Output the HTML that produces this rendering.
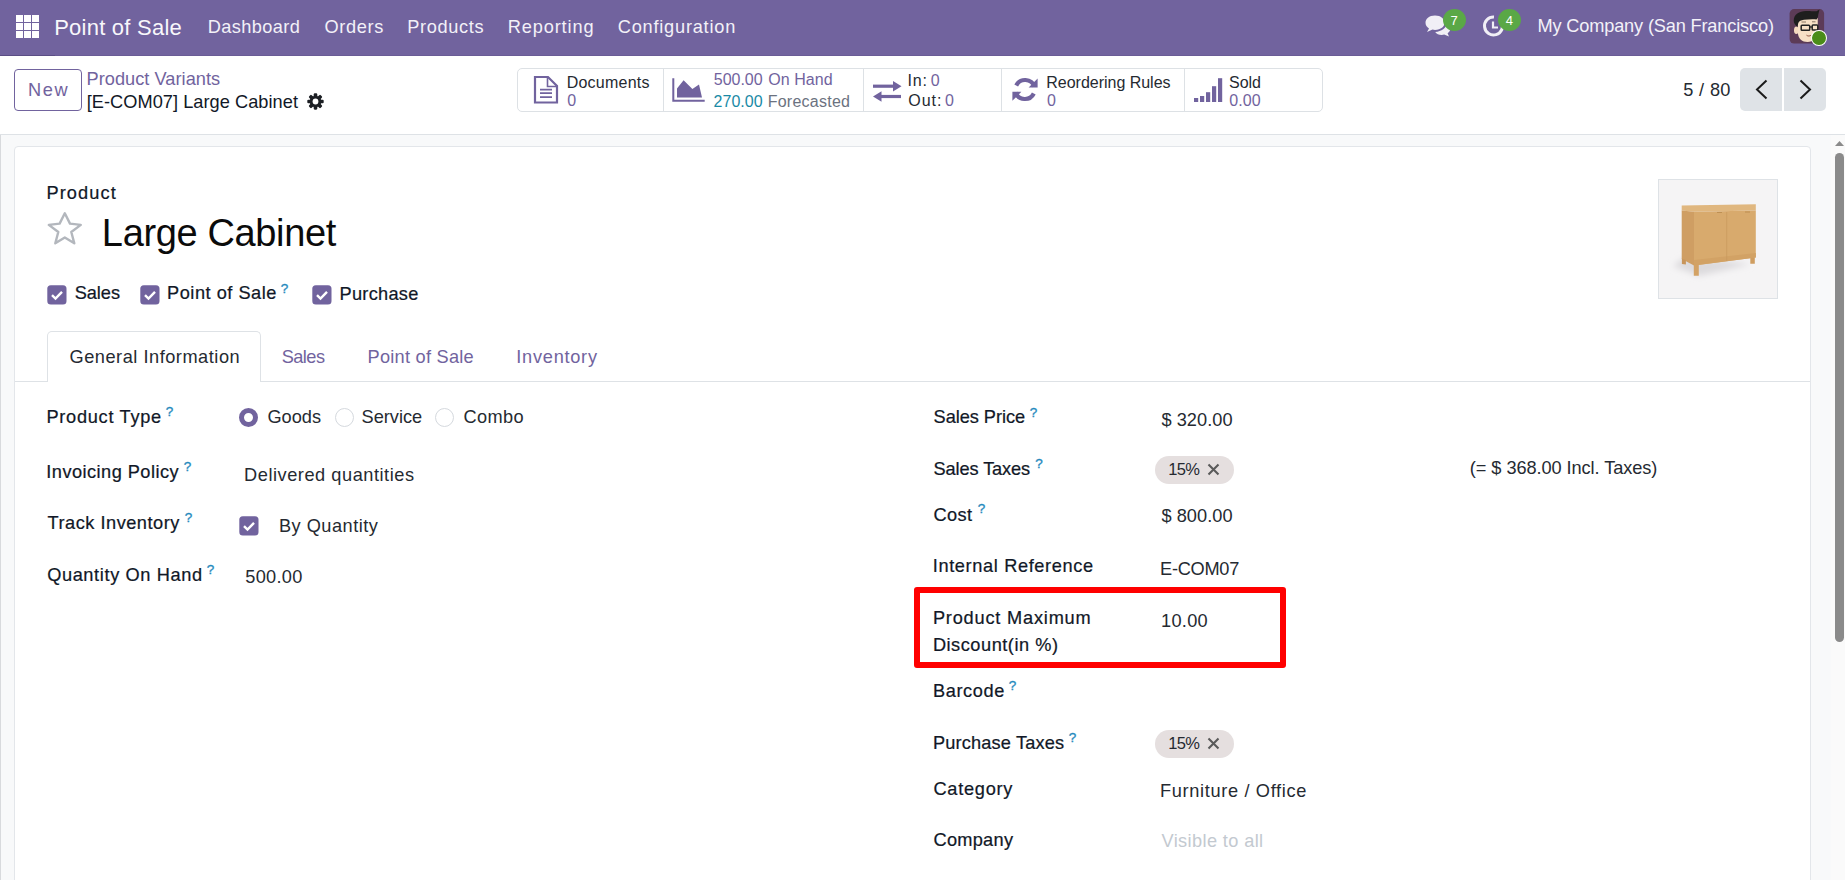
<!DOCTYPE html>
<html><head><meta charset="utf-8"><style>
html,body{margin:0;padding:0;width:1845px;height:880px;overflow:hidden;background:#fff;font-family:"Liberation Sans",sans-serif;}
.t{position:absolute;white-space:pre;line-height:1;}
</style></head><body>
<div style="position:absolute;left:0px;top:134px;width:1845px;height:746px;background:#f8f9fa"></div>
<div style="position:absolute;left:0px;top:134px;width:1px;height:746px;background:#d8dadd"></div>
<div style="position:absolute;left:14px;top:146px;width:1797px;height:760px;background:#fff;border:1px solid #e3e6ea;border-radius:4px;box-sizing:border-box"></div>
<div style="position:absolute;left:1831px;top:134px;width:14px;height:746px;background:#fafafa"></div>
<svg style="position:absolute;left:1834px;top:139px" width="11" height="8" viewBox="0 0 11 8"><path d="M1 7 L5.5 2 L10 7 Z" fill="#8a8a8a"/></svg>
<div style="position:absolute;left:1835px;top:153px;width:9px;height:489px;background:#8a8a8a;border-radius:4.5px"></div>
<div style="position:absolute;left:0px;top:0px;width:1845px;height:56px;background:#71639e"></div>
<div style="position:absolute;left:0px;top:55px;width:1845px;height:1px;background:#6a5c96"></div>
<div style="position:absolute;left:0px;top:55px;width:55px;height:1px;background:#5b4e85"></div>
<div style="position:absolute;left:16px;top:15px;width:7px;height:7px;background:#fff"></div>
<div style="position:absolute;left:16px;top:23px;width:7px;height:7px;background:#fff"></div>
<div style="position:absolute;left:16px;top:31px;width:7px;height:7px;background:#fff"></div>
<div style="position:absolute;left:24px;top:15px;width:7px;height:7px;background:#fff"></div>
<div style="position:absolute;left:24px;top:23px;width:7px;height:7px;background:#fff"></div>
<div style="position:absolute;left:24px;top:31px;width:7px;height:7px;background:#fff"></div>
<div style="position:absolute;left:32px;top:15px;width:7px;height:7px;background:#fff"></div>
<div style="position:absolute;left:32px;top:23px;width:7px;height:7px;background:#fff"></div>
<div style="position:absolute;left:32px;top:31px;width:7px;height:7px;background:#fff"></div>
<div class="t" style="left:54.19px;top:17.18px;font-size:22px;letter-spacing:0.234px;color:#f8f7fb;font-weight:400;">Point of Sale</div>
<div class="t" style="left:207.80px;top:17.59px;font-size:18.2px;letter-spacing:0.380px;color:#f3f1f8;font-weight:400;">Dashboard</div>
<div class="t" style="left:324.54px;top:17.59px;font-size:18.2px;letter-spacing:0.660px;color:#f3f1f8;font-weight:400;">Orders</div>
<div class="t" style="left:407.20px;top:17.59px;font-size:18.2px;letter-spacing:0.656px;color:#f3f1f8;font-weight:400;">Products</div>
<div class="t" style="left:507.70px;top:17.59px;font-size:18.2px;letter-spacing:0.880px;color:#f3f1f8;font-weight:400;">Reporting</div>
<div class="t" style="left:617.79px;top:17.59px;font-size:18.2px;letter-spacing:0.775px;color:#f3f1f8;font-weight:400;">Configuration</div>
<svg style="position:absolute;left:1424px;top:14px" width="28" height="24" viewBox="0 0 28 24"><path d="M11 1.5 C5 1.5 1.5 4.8 1.5 8.8 C1.5 11.2 2.8 13.2 5 14.5 L3 18 L8.5 15.6 C9.3 15.8 10.1 15.9 11 15.9 C17 15.9 20.5 12.6 20.5 8.8 C20.5 4.8 17 1.5 11 1.5 Z" fill="#f1eff6"/><path d="M22.5 9.5 C24.8 10.7 26.3 12.6 26.3 14.8 C26.3 16.6 25.3 18.2 23.6 19.3 L25 22.5 L20.2 20.6 C19.4 20.8 18.6 20.9 17.8 20.9 C14.8 20.9 12.4 19.7 11.2 17.9 C17.5 17.6 22.5 14 22.5 9.5 Z" fill="#f1eff6"/></svg>
<div style="position:absolute;left:1443px;top:9px;width:23px;height:22px;background:#5aa846;border-radius:50%"></div>
<div class="t" style="left:1450.6px;top:13.5px;font-size:13px;color:#fff;font-weight:400;">7</div>
<svg style="position:absolute;left:1482px;top:14px" width="24" height="24" viewBox="0 0 24 24"><path d="M19.6 8 A9 9 0 1 1 12 3" fill="none" stroke="#f1eff6" stroke-width="3"/><path d="M11 7.5 V13.5 H16" fill="none" stroke="#f1eff6" stroke-width="2.2"/></svg>
<div style="position:absolute;left:1498px;top:9px;width:23px;height:22px;background:#5aa846;border-radius:50%"></div>
<div class="t" style="left:1505.8px;top:13.5px;font-size:13px;color:#fff;font-weight:400;">4</div>
<div class="t" style="left:1537.50px;top:17.39px;font-size:18.2px;letter-spacing:-0.164px;color:#f3f1f8;font-weight:400;">My Company (San Francisco)</div>
<svg style="position:absolute;left:1789px;top:9px" width="36" height="36" viewBox="0 0 36 36"><rect x="0.6" y="0.1" width="34.5" height="34.5" rx="4.5" fill="#5c3b57"/>
<ellipse cx="7.3" cy="21.3" rx="2.3" ry="3.8" fill="#f5d9bd"/>
<path d="M8.8 9 L28.7 9 L28.9 24 C28.5 29.5 24 33 18.5 33 C13 33 9.5 30 8.8 24 Z" fill="#f7e0c6"/>
<path d="M4.7 11.5 C5 5 10 2.2 17 2 C21 1.8 25 2.5 27.5 2.2 L30.5 0.6 C30 2.5 29.8 4 29.3 5.5 C29 8 28.5 9.5 27.5 10.5 C24 9.8 19 10.3 15 10.8 C12 11.2 10 12 9.3 14 L8.3 18 C6.5 16 4.5 14 4.7 11.5 Z" fill="#1e1e1e"/>
<rect x="12.2" y="16.3" width="8.5" height="5" rx="0.8" fill="none" stroke="#222" stroke-width="1.5"/>
<rect x="23.2" y="16.1" width="5.6" height="5" rx="0.8" fill="none" stroke="#222" stroke-width="1.5"/>
<path d="M20.7 18 H23.2" stroke="#222" stroke-width="1.3"/>
<path d="M12.5 13 H17 M23 12.8 H26.5" stroke="#6d5a4a" stroke-width="0.8"/>
<path d="M17.5 26.2 C18.8 27.2 20.5 27.2 21.8 26.4" fill="none" stroke="#8a4a3a" stroke-width="1"/></svg>
<div style="position:absolute;left:1810.8px;top:30px;width:16px;height:16.4px;background:#4a8c19;border:1.6px solid #fff;border-radius:50%;box-sizing:border-box"></div>
<div style="position:absolute;left:0px;top:56px;width:1845px;height:79px;background:#fff;border-bottom:1px solid #dee2e6;box-sizing:border-box"></div>
<div style="position:absolute;left:14px;top:69px;width:68px;height:42px;border:1px solid #71639e;border-radius:4px;box-sizing:border-box"></div>
<div class="t" style="left:28.10px;top:80.59px;font-size:18.2px;letter-spacing:1.528px;color:#71639e;font-weight:400;">New</div>
<div class="t" style="left:86.50px;top:69.59px;font-size:18.2px;letter-spacing:0.037px;color:#71639e;font-weight:400;">Product Variants</div>
<div class="t" style="left:86.73px;top:92.99px;font-size:18.2px;letter-spacing:0.046px;color:#111827;font-weight:400;">[E-COM07] Large Cabinet</div>
<svg style="position:absolute;left:307px;top:92.9px" width="17" height="17" viewBox="0 0 17 17"><g transform="translate(8.5,8.5)"><rect x="-1.8" y="-8.2" width="3.6" height="4.5" rx="1.1" transform="rotate(0)" fill="#1c1f24"/><rect x="-1.8" y="-8.2" width="3.6" height="4.5" rx="1.1" transform="rotate(45)" fill="#1c1f24"/><rect x="-1.8" y="-8.2" width="3.6" height="4.5" rx="1.1" transform="rotate(90)" fill="#1c1f24"/><rect x="-1.8" y="-8.2" width="3.6" height="4.5" rx="1.1" transform="rotate(135)" fill="#1c1f24"/><rect x="-1.8" y="-8.2" width="3.6" height="4.5" rx="1.1" transform="rotate(180)" fill="#1c1f24"/><rect x="-1.8" y="-8.2" width="3.6" height="4.5" rx="1.1" transform="rotate(225)" fill="#1c1f24"/><rect x="-1.8" y="-8.2" width="3.6" height="4.5" rx="1.1" transform="rotate(270)" fill="#1c1f24"/><rect x="-1.8" y="-8.2" width="3.6" height="4.5" rx="1.1" transform="rotate(315)" fill="#1c1f24"/><circle r="5.8" fill="#1c1f24"/><circle r="2.9" fill="#fff"/></g></svg>
<div style="position:absolute;left:517px;top:68px;width:806px;height:44px;border:1px solid #dde1e5;border-radius:5px;box-sizing:border-box"></div>
<div style="position:absolute;left:663px;top:69px;width:1.2px;height:42px;background:#dde1e5"></div>
<div style="position:absolute;left:863px;top:69px;width:1.2px;height:42px;background:#dde1e5"></div>
<div style="position:absolute;left:1001px;top:69px;width:1.2px;height:42px;background:#dde1e5"></div>
<div style="position:absolute;left:1184px;top:69px;width:1.2px;height:42px;background:#dde1e5"></div>
<svg style="position:absolute;left:533px;top:75px" width="27" height="30" viewBox="0 0 27 30"><path d="M2 2 H15 L24 11 V27.5 H2 Z" fill="none" stroke="#71639e" stroke-width="2.2" stroke-linejoin="miter"/><path d="M14.5 2 V11.5 H24" fill="none" stroke="#71639e" stroke-width="1.6"/><path d="M7 14.6 H19 M7 18.2 H19 M7 22.2 H19" stroke="#71639e" stroke-width="1.8"/></svg>
<div class="t" style="left:566.68px;top:75.26px;font-size:16px;letter-spacing:0.245px;color:#252a31;font-weight:400;">Documents</div>
<div class="t" style="left:567.36px;top:93.26px;font-size:16px;letter-spacing:0.000px;color:#71639e;font-weight:400;">0</div>
<svg style="position:absolute;left:671px;top:77px" width="35" height="27" viewBox="0 0 35 27"><path d="M2.3 1.2 V23.8 H33.7" fill="none" stroke="#71639e" stroke-width="2"/><path d="M6 20.6 V11.5 L12.6 3.3 L21.4 12 L28 7.4 L31 20.6 Z" fill="#71639e"/></svg>
<div class="t" style="left:713.76px;top:72.26px;font-size:16px;letter-spacing:-0.016px;color:#71639e;font-weight:400;">500.00</div>
<div class="t" style="left:768.24px;top:72.26px;font-size:16px;letter-spacing:0.053px;color:#71639e;font-weight:400;">On Hand</div>
<div class="t" style="left:713.60px;top:93.86px;font-size:16px;letter-spacing:0.016px;color:#1a8aa6;font-weight:400;">270.00</div>
<div class="t" style="left:767.68px;top:93.86px;font-size:16px;letter-spacing:0.253px;color:#6b7280;font-weight:400;">Forecasted</div>
<svg style="position:absolute;left:872px;top:80px" width="31" height="23" viewBox="0 0 31 23"><path d="M1 6.2 H22" stroke="#71639e" stroke-width="3.2"/><path d="M21 1 L29.5 6.2 L21 11.4 Z" fill="#71639e"/><path d="M29 16.5 H8" stroke="#71639e" stroke-width="3.2"/><path d="M9.5 11.3 L1 16.5 L9.5 21.7 Z" fill="#71639e"/></svg>
<div class="t" style="left:907.52px;top:73.26px;font-size:16px;letter-spacing:0.860px;color:#252a31;font-weight:400;">In:</div>
<div class="t" style="left:930.76px;top:73.26px;font-size:16px;letter-spacing:0.000px;color:#71639e;font-weight:400;">0</div>
<div class="t" style="left:908.24px;top:93.26px;font-size:16px;letter-spacing:0.987px;color:#252a31;font-weight:400;">Out:</div>
<div class="t" style="left:944.96px;top:93.26px;font-size:16px;letter-spacing:0.000px;color:#71639e;font-weight:400;">0</div>
<svg style="position:absolute;left:1012px;top:77px" width="28" height="27" viewBox="0 0 28 27"><path d="M22.5 9.5 A10 10 0 0 0 4.2 8.5" fill="none" stroke="#71639e" stroke-width="4.2"/><path d="M25.6 1.6 V10.6 H16.6 Z" fill="#71639e"/><path d="M3.5 15.5 A10 10 0 0 0 21.8 16.5" fill="none" stroke="#71639e" stroke-width="4.2"/><path d="M0.4 23.8 V14.8 H9.4 Z" fill="#71639e"/></svg>
<div class="t" style="left:1046.28px;top:75.26px;font-size:16px;letter-spacing:-0.016px;color:#252a31;font-weight:400;">Reordering Rules</div>
<div class="t" style="left:1046.96px;top:93.26px;font-size:16px;letter-spacing:0.000px;color:#71639e;font-weight:400;">0</div>
<svg style="position:absolute;left:1194px;top:78px" width="30" height="24" viewBox="0 0 30 24"><rect x="0" y="20" width="4.2" height="4" fill="#71639e"/><rect x="6" y="18" width="4.2" height="6" fill="#71639e"/><rect x="12" y="14.2" width="4.2" height="9.8" fill="#71639e"/><rect x="18" y="8.2" width="4.2" height="15.8" fill="#71639e"/><rect x="24" y="0.2" width="4.2" height="23.8" fill="#71639e"/></svg>
<div class="t" style="left:1229.08px;top:75.26px;font-size:16px;letter-spacing:-0.027px;color:#252a31;font-weight:400;">Sold</div>
<div class="t" style="left:1229.36px;top:92.76px;font-size:16px;letter-spacing:0.040px;color:#71639e;font-weight:400;">0.00</div>
<div class="t" style="left:1683.27px;top:80.59px;font-size:18.2px;letter-spacing:0.342px;color:#252a31;font-weight:400;">5 / 80</div>
<div style="position:absolute;left:1740px;top:68px;width:42px;height:43px;background:#dfe3e7;border-radius:5px 0 0 5px"></div>
<div style="position:absolute;left:1784px;top:68px;width:42px;height:43px;background:#dfe3e7;border-radius:0 5px 5px 0"></div>
<svg style="position:absolute;left:1754px;top:79px" width="16" height="21" viewBox="0 0 16 21"><path d="M12.5 1.5 L3 10.5 L12.5 19.5" fill="none" stroke="#1b1b1b" stroke-width="2"/></svg>
<svg style="position:absolute;left:1797px;top:79px" width="16" height="21" viewBox="0 0 16 21"><path d="M3.5 1.5 L13 10.5 L3.5 19.5" fill="none" stroke="#1b1b1b" stroke-width="2"/></svg>
<div class="t" style="left:46.50px;top:183.59px;font-size:18.2px;letter-spacing:1.090px;color:#111827;font-weight:400;-webkit-text-stroke:0.22px #111827;">Product</div>
<svg style="position:absolute;left:46px;top:211px" width="38" height="36" viewBox="0 0 38 36"><path d="M18.8 2.3 L24 12.6 L34.8 13.9 L25.3 21 L28.3 32.3 L18.8 26.5 L9.3 32.3 L12.3 21 L2.8 13.9 L13.6 12.6 Z" fill="none" stroke="#b3b7bd" stroke-width="2.4" stroke-linejoin="round"/></svg>
<div class="t" style="left:101.86px;top:214.23px;font-size:38px;letter-spacing:-0.360px;color:#0b0b0b;font-weight:400;">Large Cabinet</div>
<svg style="position:absolute;left:47px;top:285px" width="20" height="20" viewBox="0 0 20 20"><rect x="0.3" y="0.3" width="19.2" height="19.2" rx="3.5" fill="#71639e"/><path d="M5 10.2 L8.5 13.6 L15 6.8" fill="none" stroke="#fff" stroke-width="2.4"/></svg>
<div class="t" style="left:74.78px;top:284.19px;font-size:18.2px;letter-spacing:-0.072px;color:#111827;font-weight:400;-webkit-text-stroke:0.22px #111827;">Sales</div>
<svg style="position:absolute;left:140px;top:285px" width="20" height="20" viewBox="0 0 20 20"><rect x="0.3" y="0.3" width="19.2" height="19.2" rx="3.5" fill="#71639e"/><path d="M5 10.2 L8.5 13.6 L15 6.8" fill="none" stroke="#fff" stroke-width="2.4"/></svg>
<div class="t" style="left:167.10px;top:284.19px;font-size:18.2px;letter-spacing:0.507px;color:#111827;font-weight:400;-webkit-text-stroke:0.22px #111827;">Point of Sale</div>
<div class="t" style="left:280.8px;top:281.7px;font-size:13.5px;color:#2389bd;font-weight:400;-webkit-text-stroke:0.3px #2389bd">?</div>
<svg style="position:absolute;left:312px;top:285px" width="20" height="20" viewBox="0 0 20 20"><rect x="0.3" y="0.3" width="19.2" height="19.2" rx="3.5" fill="#71639e"/><path d="M5 10.2 L8.5 13.6 L15 6.8" fill="none" stroke="#fff" stroke-width="2.4"/></svg>
<div class="t" style="left:339.50px;top:284.59px;font-size:18.2px;letter-spacing:0.289px;color:#111827;font-weight:400;-webkit-text-stroke:0.22px #111827;">Purchase</div>
<div style="position:absolute;left:15px;top:381px;width:1795px;height:1px;background:#dee2e6"></div>
<div style="position:absolute;left:47px;top:331px;width:214px;height:51px;background:#fff;border:1px solid #dee2e6;border-bottom:none;border-radius:5px 5px 0 0;box-sizing:border-box"></div>
<div class="t" style="left:69.49px;top:347.59px;font-size:18.2px;letter-spacing:0.523px;color:#252a31;font-weight:400;">General Information</div>
<div class="t" style="left:281.78px;top:347.59px;font-size:18.2px;letter-spacing:-0.572px;color:#71639e;font-weight:400;">Sales</div>
<div class="t" style="left:367.50px;top:347.59px;font-size:18.2px;letter-spacing:0.257px;color:#71639e;font-weight:400;">Point of Sale</div>
<div class="t" style="left:516.32px;top:347.59px;font-size:18.2px;letter-spacing:0.735px;color:#71639e;font-weight:400;">Inventory</div>
<div class="t" style="left:46.50px;top:407.59px;font-size:18.2px;letter-spacing:0.709px;color:#111827;font-weight:400;-webkit-text-stroke:0.22px #111827;">Product Type</div>
<div class="t" style="left:165.8px;top:404.7px;font-size:13.5px;color:#2389bd;font-weight:400;-webkit-text-stroke:0.3px #2389bd">?</div>
<div style="position:absolute;left:239px;top:408px;width:19px;height:19px;background:#fff;border:5px solid #71639e;border-radius:50%;box-sizing:border-box"></div>
<div class="t" style="left:267.49px;top:407.59px;font-size:18.2px;letter-spacing:-0.024px;color:#252a31;font-weight:400;">Goods</div>
<div style="position:absolute;left:334.5px;top:408px;width:19px;height:19px;background:#fff;border:1px solid #d5d9de;border-radius:50%;box-sizing:border-box"></div>
<div class="t" style="left:361.58px;top:407.59px;font-size:18.2px;letter-spacing:-0.010px;color:#252a31;font-weight:400;">Service</div>
<div style="position:absolute;left:435px;top:408px;width:19px;height:19px;background:#fff;border:1px solid #d5d9de;border-radius:50%;box-sizing:border-box"></div>
<div class="t" style="left:463.49px;top:407.59px;font-size:18.2px;letter-spacing:0.397px;color:#252a31;font-weight:400;">Combo</div>
<div class="t" style="left:46.32px;top:462.59px;font-size:18.2px;letter-spacing:0.459px;color:#111827;font-weight:400;-webkit-text-stroke:0.22px #111827;">Invoicing Policy</div>
<div class="t" style="left:183.8px;top:459.7px;font-size:13.5px;color:#2389bd;font-weight:400;-webkit-text-stroke:0.3px #2389bd">?</div>
<div class="t" style="left:244.10px;top:465.59px;font-size:18.2px;letter-spacing:0.537px;color:#252a31;font-weight:400;">Delivered quantities</div>
<div class="t" style="left:47.59px;top:513.59px;font-size:18.2px;letter-spacing:0.507px;color:#111827;font-weight:400;-webkit-text-stroke:0.22px #111827;">Track Inventory</div>
<div class="t" style="left:184.8px;top:510.7px;font-size:13.5px;color:#2389bd;font-weight:400;-webkit-text-stroke:0.3px #2389bd">?</div>
<svg style="position:absolute;left:239px;top:516px" width="20" height="20" viewBox="0 0 20 20"><rect x="0.3" y="0.3" width="19.2" height="19.2" rx="3.5" fill="#71639e"/><path d="M5 10.2 L8.5 13.6 L15 6.8" fill="none" stroke="#fff" stroke-width="2.4"/></svg>
<div class="t" style="left:278.90px;top:516.79px;font-size:18.2px;letter-spacing:0.505px;color:#252a31;font-weight:400;">By Quantity</div>
<div class="t" style="left:47.14px;top:565.59px;font-size:18.2px;letter-spacing:0.624px;color:#111827;font-weight:400;-webkit-text-stroke:0.22px #111827;">Quantity On Hand</div>
<div class="t" style="left:206.8px;top:562.7px;font-size:13.5px;color:#2389bd;font-weight:400;-webkit-text-stroke:0.3px #2389bd">?</div>
<div class="t" style="left:245.27px;top:568.19px;font-size:18.2px;letter-spacing:0.273px;color:#252a31;font-weight:400;">500.00</div>
<div class="t" style="left:933.58px;top:407.59px;font-size:18.2px;letter-spacing:-0.045px;color:#111827;font-weight:400;-webkit-text-stroke:0.22px #111827;">Sales Price</div>
<div class="t" style="left:1029.8px;top:405.7px;font-size:13.5px;color:#2389bd;font-weight:400;-webkit-text-stroke:0.3px #2389bd">?</div>
<div class="t" style="left:1161.42px;top:410.59px;font-size:18.2px;letter-spacing:0.060px;color:#252a31;font-weight:400;">$ 320.00</div>
<div class="t" style="left:933.58px;top:459.59px;font-size:18.2px;letter-spacing:-0.112px;color:#111827;font-weight:400;-webkit-text-stroke:0.22px #111827;">Sales Taxes</div>
<div class="t" style="left:1035.2px;top:456.7px;font-size:13.5px;color:#2389bd;font-weight:400;-webkit-text-stroke:0.3px #2389bd">?</div>
<div style="position:absolute;left:1155px;top:456px;width:79px;height:28px;background:#e5dfdf;border-radius:14px"></div>
<div class="t" style="left:1168.36px;top:461.03px;font-size:16.5px;letter-spacing:-0.713px;color:#252a31;font-weight:400;">15%</div>
<svg style="position:absolute;left:1207px;top:463px" width="13" height="13" viewBox="0 0 13 13"><path d="M1.5 1.5 L11.5 11.5 M11.5 1.5 L1.5 11.5" stroke="#5a5a5a" stroke-width="2.1"/></svg>
<div class="t" style="left:1469.86px;top:458.99px;font-size:18.2px;letter-spacing:-0.076px;color:#252a31;font-weight:400;">(= $ 368.00 Incl. Taxes)</div>
<div class="t" style="left:933.49px;top:505.59px;font-size:18.2px;letter-spacing:0.415px;color:#111827;font-weight:400;-webkit-text-stroke:0.22px #111827;">Cost</div>
<div class="t" style="left:977.8px;top:502.3px;font-size:13.5px;color:#2389bd;font-weight:400;-webkit-text-stroke:0.3px #2389bd">?</div>
<div class="t" style="left:1161.42px;top:506.59px;font-size:18.2px;letter-spacing:0.060px;color:#252a31;font-weight:400;">$ 800.00</div>
<div class="t" style="left:932.72px;top:556.59px;font-size:18.2px;letter-spacing:0.633px;color:#111827;font-weight:400;-webkit-text-stroke:0.22px #111827;">Internal Reference</div>
<div class="t" style="left:1160.10px;top:559.59px;font-size:18.2px;letter-spacing:-0.281px;color:#252a31;font-weight:400;">E-COM07</div>
<div class="t" style="left:932.90px;top:608.59px;font-size:18.2px;letter-spacing:0.803px;color:#111827;font-weight:400;-webkit-text-stroke:0.22px #111827;">Product Maximum</div>
<div class="t" style="left:932.90px;top:635.99px;font-size:18.2px;letter-spacing:0.527px;color:#111827;font-weight:400;-webkit-text-stroke:0.22px #111827;">Discount(in %)</div>
<div class="t" style="left:1161.04px;top:611.59px;font-size:18.2px;letter-spacing:0.275px;color:#252a31;font-weight:400;">10.00</div>
<div class="t" style="left:932.90px;top:681.59px;font-size:18.2px;letter-spacing:0.621px;color:#111827;font-weight:400;-webkit-text-stroke:0.22px #111827;">Barcode</div>
<div class="t" style="left:1008.8px;top:678.7px;font-size:13.5px;color:#2389bd;font-weight:400;-webkit-text-stroke:0.3px #2389bd">?</div>
<div class="t" style="left:932.90px;top:733.59px;font-size:18.2px;letter-spacing:0.166px;color:#111827;font-weight:400;-webkit-text-stroke:0.22px #111827;">Purchase Taxes</div>
<div class="t" style="left:1068.8px;top:731.1px;font-size:13.5px;color:#2389bd;font-weight:400;-webkit-text-stroke:0.3px #2389bd">?</div>
<div style="position:absolute;left:1155px;top:730px;width:79px;height:28px;background:#e5dfdf;border-radius:14px"></div>
<div class="t" style="left:1168.36px;top:735.03px;font-size:16.5px;letter-spacing:-0.713px;color:#252a31;font-weight:400;">15%</div>
<svg style="position:absolute;left:1207px;top:737px" width="13" height="13" viewBox="0 0 13 13"><path d="M1.5 1.5 L11.5 11.5 M11.5 1.5 L1.5 11.5" stroke="#5a5a5a" stroke-width="2.1"/></svg>
<div class="t" style="left:933.49px;top:779.59px;font-size:18.2px;letter-spacing:0.730px;color:#111827;font-weight:400;-webkit-text-stroke:0.22px #111827;">Category</div>
<div class="t" style="left:1160.10px;top:781.59px;font-size:18.2px;letter-spacing:0.653px;color:#252a31;font-weight:400;">Furniture / Office</div>
<div class="t" style="left:933.49px;top:830.59px;font-size:18.2px;letter-spacing:0.277px;color:#111827;font-weight:400;-webkit-text-stroke:0.22px #111827;">Company</div>
<div class="t" style="left:1161.51px;top:832.19px;font-size:18.2px;letter-spacing:0.380px;color:#c3c9d0;font-weight:400;">Visible to all</div>
<div style="position:absolute;left:914px;top:587px;width:372px;height:81px;border:6px solid #ff0000;border-radius:3px;box-sizing:border-box"></div>
<div style="position:absolute;left:1658px;top:179px;width:120px;height:120px;background:#f5f4f5;border:1px solid #dee2e6;box-sizing:border-box"></div>
<svg style="position:absolute;left:1659px;top:180px" width="118" height="118" viewBox="0 0 118 118"><defs><filter id="bl" x="-50%" y="-50%" width="200%" height="200%"><feGaussianBlur stdDeviation="3"/></filter></defs>
<path d="M14 86 L40 96 L92 84 L60 80 L25 78 Z" fill="#dcdadd" filter="url(#bl)"/>
<path d="M22.7 25.5 L96.8 24.2 L96.8 30.5 L35 31.7 L22.7 30.5 Z" fill="#e0b77f"/>
<path d="M22.7 30.5 L35 31.7 L35 85.5 L22.7 79 Z" fill="#cf9e63"/>
<path d="M35 31.7 L96.8 30.5 L96.8 77.5 L35 85.5 Z" fill="#d8aa6d"/>
<path d="M35 80 L96.8 73 L96.8 77.5 L35 85.5 Z" fill="#d2a265"/>
<path d="M67.7 32 L67.7 81" stroke="#c99a5c" stroke-width="0.7"/>
<path d="M58 32.5 H63 M86 32 H91" stroke="#b8894d" stroke-width="0.8"/>
<path d="M22.9 78.5 L26.9 80.3 L26.9 84.6 L22.9 84 Z" fill="#c8955a"/>
<path d="M34.8 85 L39.8 84.4 L39.8 95.7 L34.8 95.7 Z" fill="#d3a265"/>
<path d="M91.3 78 L95.8 77.6 L95.8 83.8 L91.3 83.8 Z" fill="#cf9d60"/></svg>
</body></html>
